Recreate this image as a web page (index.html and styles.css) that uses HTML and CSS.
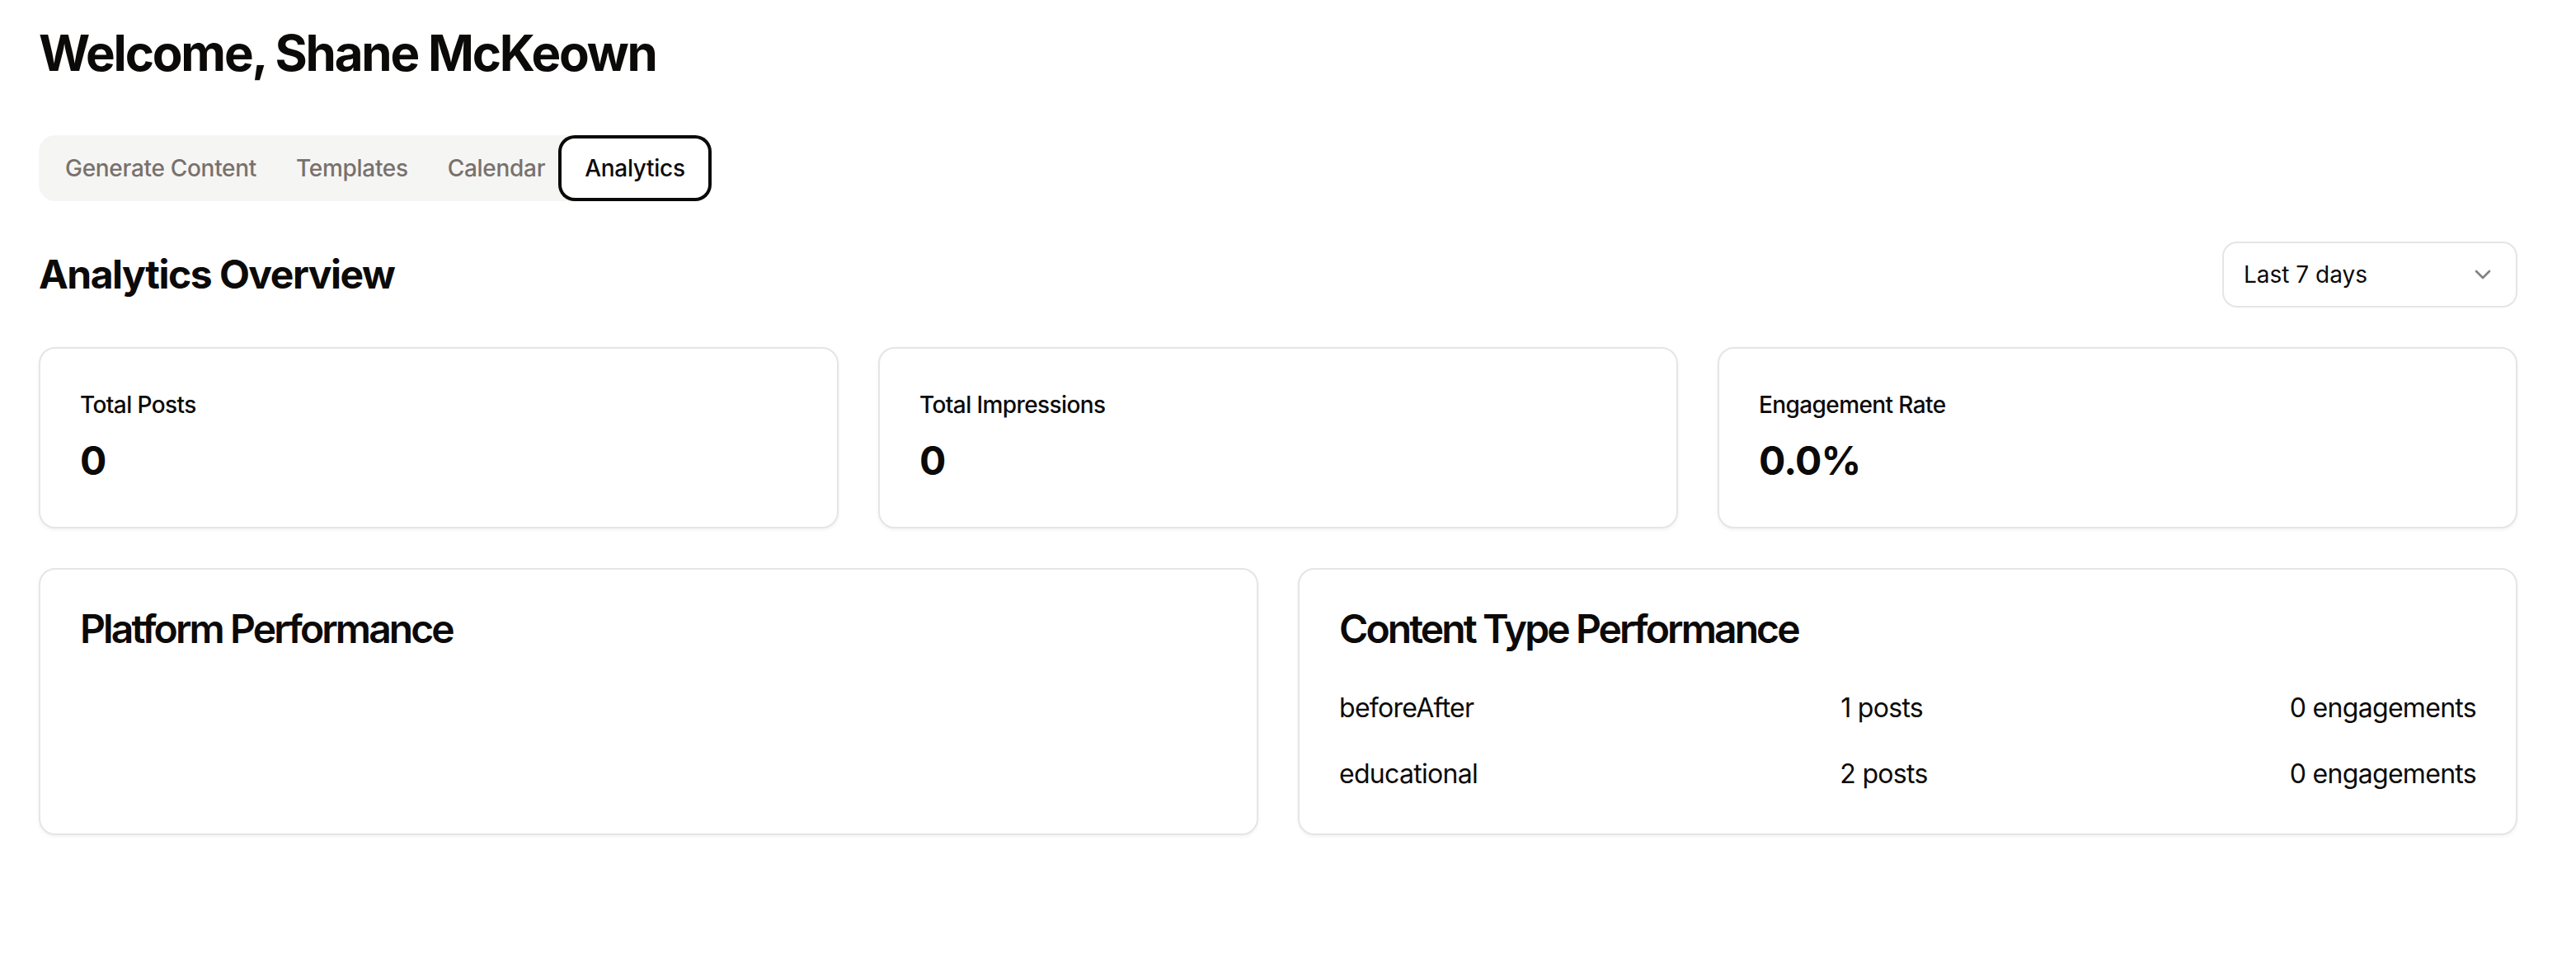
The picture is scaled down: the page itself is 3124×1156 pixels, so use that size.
FILE: index.html
```html
<!DOCTYPE html>
<html lang="en">
<head>
<meta charset="utf-8">
<title>Analytics</title>
<link rel="stylesheet" href="styles.css">
</head>
<body>
<main class="page">
  <h1 class="welcome">Welcome, Shane McKeown</h1>

  <nav class="tabs">
    <button class="tab">Generate Content</button>
    <button class="tab">Templates</button>
    <button class="tab">Calendar</button>
    <button class="tab tab-active">Analytics</button>
  </nav>

  <section class="overview">
    <div class="overview-head">
      <h2 class="section-title">Analytics Overview</h2>
      <div class="select">
        <span class="select-value">Last 7 days</span>
        <svg class="chevron" viewBox="0 0 24 24" width="32" height="32" fill="none" stroke="currentColor" stroke-width="2" stroke-linecap="round" stroke-linejoin="round"><path d="m6 9 6 6 6-6"/></svg>
      </div>
    </div>

    <div class="stats">
      <div class="card stat">
        <div class="stat-label">Total Posts</div>
        <div class="stat-value">0</div>
      </div>
      <div class="card stat">
        <div class="stat-label">Total Impressions</div>
        <div class="stat-value">0</div>
      </div>
      <div class="card stat">
        <div class="stat-label">Engagement Rate</div>
        <div class="stat-value">0.0%</div>
      </div>
    </div>

    <div class="panels">
      <div class="card panel">
        <div class="panel-header"><h3 class="panel-title">Platform Performance</h3></div>
        <div class="panel-content"></div>
      </div>
      <div class="card panel">
        <div class="panel-header"><h3 class="panel-title">Content Type Performance</h3></div>
        <div class="panel-content rows">
          <div class="row"><span>beforeAfter</span><span>1 posts</span><span>0 engagements</span></div>
          <div class="row"><span>educational</span><span>2 posts</span><span>0 engagements</span></div>
        </div>
      </div>
    </div>
  </section>
</main>
</body>
</html>
```

FILE: styles.css
```css
* { box-sizing: border-box; }

html, body {
  margin: 0;
  padding: 0;
  background: #ffffff;
}

body {
  font-family: Inter, "Noto Sans", sans-serif;
  color: #0c0a09;
}

.page {
  padding: 28px 71px 60px 47px;
}

.welcome {
  margin: 0 0 64px 0;
  font-size: 60px;
  line-height: 72px;
  font-weight: 700;
  letter-spacing: -2.2px;
}

.tabs {
  display: inline-flex;
  align-items: center;
  height: 80px;
  padding: 8px;
  background: #f5f5f4;
  border-radius: 20px;
}

.tab {
  height: 64px;
  padding: 0 24px;
  border: 0;
  background: transparent;
  font-family: inherit;
  font-size: 28px;
  font-weight: 500;
  letter-spacing: -0.3px;
  color: #78716c;
  border-radius: 12px;
  white-space: nowrap;
}

.tab-active {
  background: #ffffff;
  color: #0c0a09;
  box-shadow: 0 0 0 4px #ffffff, 0 0 0 8px #0c0a09;
}

.overview-head {
  margin-top: 49px;
  display: flex;
  align-items: center;
  justify-content: space-between;
}

.section-title {
  margin: 0;
  font-size: 48px;
  line-height: 64px;
  font-weight: 700;
  letter-spacing: -1.5px;
}

.select {
  width: 358px;
  height: 80px;
  display: flex;
  align-items: center;
  justify-content: space-between;
  padding: 0 24px;
  border: 2px solid #e7e5e4;
  border-radius: 18px;
  background: #fff;
}

.select-value {
  font-size: 28px;
  color: #0c0a09;
}

.chevron {
  color: #0c0a09;
  opacity: 0.5;
}

.card {
  background: #fff;
  border: 2px solid #e7e5e4;
  border-radius: 20px;
  box-shadow: 0 2px 4px rgba(0, 0, 0, 0.05);
}

.stats {
  margin-top: 48px;
  display: grid;
  grid-template-columns: repeat(3, 1fr);
  gap: 48px;
}

.stat {
  padding: 48px;
}

.stat-label {
  font-size: 28px;
  line-height: 40px;
  font-weight: 500;
  letter-spacing: -0.6px;
}

.stat-value {
  margin-top: 16px;
  font-size: 48px;
  line-height: 64px;
  font-weight: 700;
  letter-spacing: -0.8px;
}

.panels {
  margin-top: 48px;
  display: grid;
  grid-template-columns: 1fr 1fr;
  gap: 48px;
}

.panel-header {
  padding: 48px;
}

.panel-title {
  margin: 0;
  font-size: 48px;
  line-height: 48px;
  font-weight: 600;
  letter-spacing: -2.9px;
}

.panel-content {
  padding: 0 48px 48px 48px;
}

.rows {
  display: flex;
  flex-direction: column;
  gap: 32px;
}

.row {
  display: flex;
  justify-content: space-between;
  font-size: 32px;
  line-height: 48px;
  letter-spacing: -0.7px;
}
```
